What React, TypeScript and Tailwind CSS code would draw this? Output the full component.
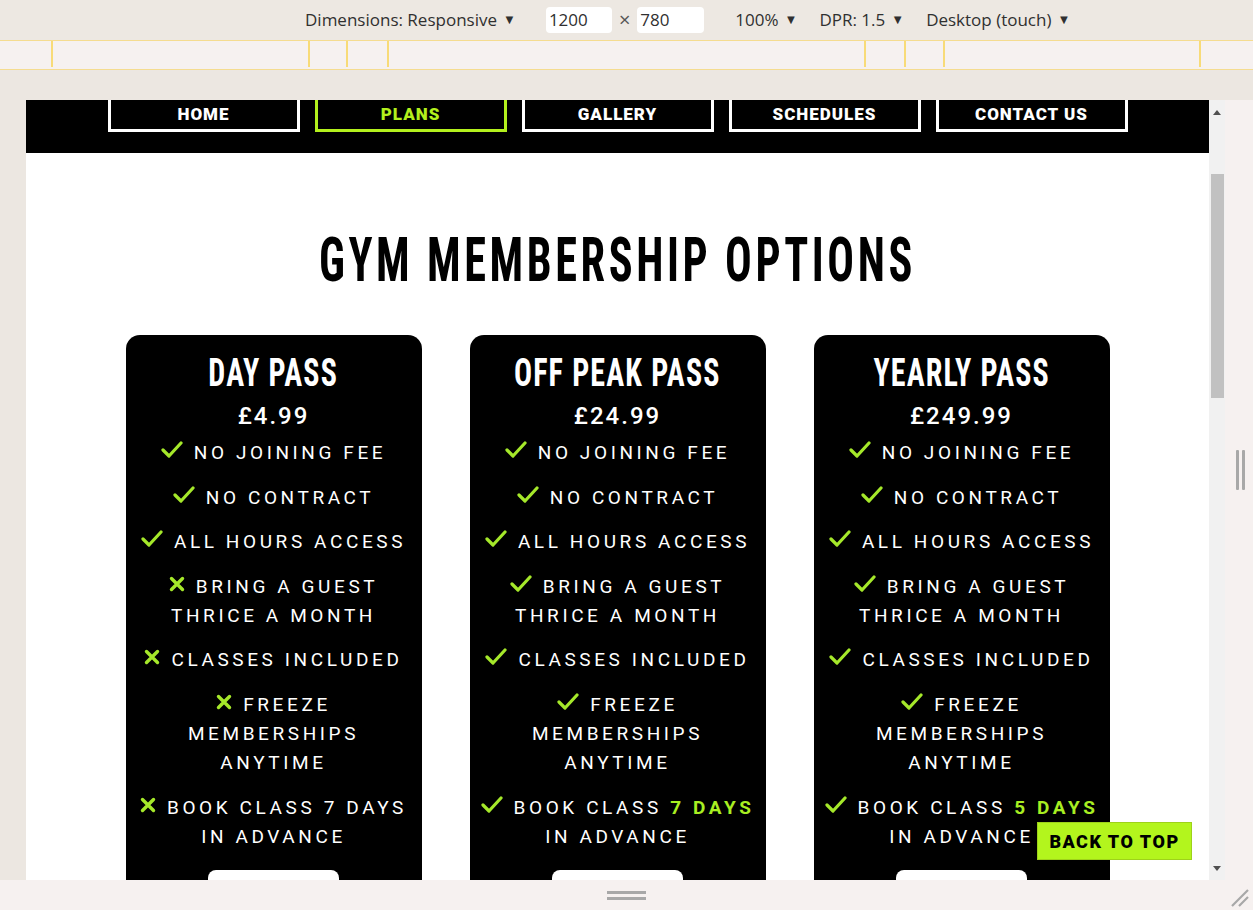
import React from 'react';

const GREEN = '#a5e82a';
const CONDENSED = "font-['Roboto_Condensed','Liberation_Sans',sans-serif]";

type Feature = { ok: boolean; lines: React.ReactNode[] };
type Plan = { name: string; price: string; features: Feature[] };

const lastLine = (days: string | null, strong: boolean) =>
  days ? (
    <>
      BOOK CLASS{' '}
      {strong ? <span className="font-bold text-[#a8ee22]">{days}</span> : days}
    </>
  ) : null;

const PLANS: Plan[] = [
  {
    name: 'DAY PASS',
    price: '£4.99',
    features: [
      { ok: true, lines: ['NO JOINING FEE'] },
      { ok: true, lines: ['NO CONTRACT'] },
      { ok: true, lines: ['ALL HOURS ACCESS'] },
      { ok: false, lines: ['BRING A GUEST', 'THRICE A MONTH'] },
      { ok: false, lines: ['CLASSES INCLUDED'] },
      { ok: false, lines: ['FREEZE', 'MEMBERSHIPS', 'ANYTIME'] },
      { ok: false, lines: [lastLine('7 DAYS', false), 'IN ADVANCE'] },
    ],
  },
  {
    name: 'OFF PEAK PASS',
    price: '£24.99',
    features: [
      { ok: true, lines: ['NO JOINING FEE'] },
      { ok: true, lines: ['NO CONTRACT'] },
      { ok: true, lines: ['ALL HOURS ACCESS'] },
      { ok: true, lines: ['BRING A GUEST', 'THRICE A MONTH'] },
      { ok: true, lines: ['CLASSES INCLUDED'] },
      { ok: true, lines: ['FREEZE', 'MEMBERSHIPS', 'ANYTIME'] },
      { ok: true, lines: [lastLine('7 DAYS', true), 'IN ADVANCE'] },
    ],
  },
  {
    name: 'YEARLY PASS',
    price: '£249.99',
    features: [
      { ok: true, lines: ['NO JOINING FEE'] },
      { ok: true, lines: ['NO CONTRACT'] },
      { ok: true, lines: ['ALL HOURS ACCESS'] },
      { ok: true, lines: ['BRING A GUEST', 'THRICE A MONTH'] },
      { ok: true, lines: ['CLASSES INCLUDED'] },
      { ok: true, lines: ['FREEZE', 'MEMBERSHIPS', 'ANYTIME'] },
      { ok: true, lines: [lastLine('5 DAYS', true), 'IN ADVANCE'] },
    ],
  },
];

const NAV = ['HOME', 'PLANS', 'GALLERY', 'SCHEDULES', 'CONTACT US'];

function Check() {
  return (
    <svg width="22" height="17" viewBox="0 0 22 17" className="inline-block align-[1px] mr-[11px]">
      <path d="M2 9 L8 15 L20 2" fill="none" stroke={GREEN} strokeWidth="3.2" strokeLinecap="round" strokeLinejoin="round" />
    </svg>
  );
}

function Cross() {
  return (
    <svg width="16" height="16" viewBox="0 0 16 16" className="inline-block align-[1px] mr-[11px]">
      <path d="M2.5 2.5 L13.5 13.5 M13.5 2.5 L2.5 13.5" stroke={GREEN} strokeWidth="3.4" strokeLinecap="round" />
    </svg>
  );
}

function Card({ plan }: { plan: Plan }) {
  return (
    <div className="w-[296px] shrink-0 bg-black rounded-[14px] pt-[15px] px-[10px] text-white flex flex-col items-center">
      <h2 className={`${CONDENSED} font-bold text-[39px] leading-[46px] tracking-[1.5px] whitespace-nowrap scale-x-[0.77]`}>
        {plan.name}
      </h2>
      <div className="font-['Roboto',sans-serif] font-medium text-[24px] leading-[30px] tracking-[2px] mt-[5px]">{plan.price}</div>
      <div className="mt-[7px] font-['Roboto',sans-serif] text-[19px] leading-[29px] tracking-[3.6px] text-center flex flex-col gap-[15.6px]">
        {plan.features.map((f, i) => (
          <p key={i} className="whitespace-nowrap">
            {f.ok ? <Check /> : <Cross />}
            {f.lines.map((l, j) => (
              <React.Fragment key={j}>
                {j > 0 && <br />}
                {l}
              </React.Fragment>
            ))}
          </p>
        ))}
      </div>
      <div className="mt-[19px] w-[131px] h-[40px] bg-white rounded-[8px]" />
    </div>
  );
}

function Tri({ down }: { down?: boolean }) {
  return (
    <svg width="8" height="5" viewBox="0 0 8 5">
      <path d={down ? 'M0 0 L8 0 L4 5 Z' : 'M0 5 L8 5 L4 0 Z'} fill="#505050" />
    </svg>
  );
}

export default function App() {
  const marks = [51, 255, 36, 39, 475, 38, 37, 254];
  return (
    <div className="w-[1253px] h-[910px] overflow-hidden bg-[#ece7e1] flex flex-col font-['Open_Sans',sans-serif]">
      {/* devtools toolbar */}
      <div className="h-[40px] shrink-0 bg-[#ede8e2] flex items-center pl-[305px] text-[17px] text-[#303030]">
        <span>Dimensions: Responsive</span>
        <span className="ml-[6px] text-[13px]">▼</span>
        <div className="ml-[30px] w-[66px] h-[26px] bg-white rounded-[4px] pl-[3px] leading-[26px]">1200</div>
        <span className="mx-[7px] text-[20px] leading-none text-[#555]">×</span>
        <div className="w-[67px] h-[26px] bg-white rounded-[4px] pl-[3px] leading-[26px]">780</div>
        <span className="ml-[31px]">100%</span>
        <span className="ml-[6px] text-[13px]">▼</span>
        <span className="ml-[22px]">DPR: 1.5</span>
        <span className="ml-[6px] text-[13px]">▼</span>
        <span className="ml-[22px]">Desktop (touch)</span>
        <span className="ml-[6px] text-[13px]">▼</span>
      </div>

      {/* media query ruler */}
      <div className="h-[30px] shrink-0 bg-[#f6f1f0] border-y border-[#f5dc90] flex">
        {marks.map((w, i) => (
          <React.Fragment key={i}>
            <div style={{ width: w }} className="shrink-0" />
            <div className="w-[2px] shrink-0 bg-[#f8db78] mb-[2px]" />
          </React.Fragment>
        ))}
      </div>

      <div className="h-[30px] shrink-0" />

      <div className="h-[780px] shrink-0 flex">
        <div className="w-[26px] shrink-0" />

        {/* page viewport */}
        <div className="w-[1183px] shrink-0 bg-white relative overflow-hidden">
          <nav className="h-[53px] bg-black flex justify-center gap-[15px]">
            {NAV.map((n) => (
              <div
                key={n}
                className={`w-[192px] h-[32px] border-x-[3px] border-b-[3px] flex items-center justify-center font-['Roboto',sans-serif] font-black text-[17px] tracking-[1px] ${
                  n === 'PLANS' ? 'border-[#b3f01d] text-[#b3f01d]' : 'border-white text-white'
                }`}
              >
                {n}
              </div>
            ))}
          </nav>

          <div className="mt-[72px] flex justify-center">
            <h1 className={`${CONDENSED} font-bold text-[62px] leading-[70px] tracking-[5px] text-black whitespace-nowrap scale-x-[0.715]`}>
              GYM MEMBERSHIP OPTIONS
            </h1>
          </div>

          <div className="mt-[40px] flex justify-center gap-[48px]">
            {PLANS.map((p) => (
              <Card key={p.name} plan={p} />
            ))}
          </div>

          <div className="absolute right-[17px] bottom-[20px] w-[155px] h-[38px] bg-[#b3f51d] border border-[#9ed21a] flex items-center justify-center font-['Roboto',sans-serif] font-black text-[18px] tracking-[1.5px] text-black">
            BACK TO TOP
          </div>
        </div>

        {/* scrollbar */}
        <div className="w-[16px] shrink-0 bg-[#f1f1f1] flex flex-col items-center">
          <div className="h-[15px] flex items-end pt-[6px]">
            <Tri />
          </div>
          <div className="mt-[59px] w-[13px] h-[224px] bg-[#c1c1c1]" />
          <div className="flex-1" />
          <div className="h-[16px] flex items-start pt-[2px]">
            <Tri down />
          </div>
        </div>

        <div className="w-[28px] shrink-0 bg-[#f6f1f0] flex items-center pl-[11px] pb-[40px]">
          <div className="flex gap-[3px]">
            <div className="w-[3px] h-[40px] bg-[#a8a8a8] rounded-[1px]" />
            <div className="w-[3px] h-[40px] bg-[#a8a8a8] rounded-[1px]" />
          </div>
        </div>
      </div>

      {/* bottom resize bar */}
      <div className="h-[30px] shrink-0 bg-[#f6f1f0] flex items-center pl-[607px]">
        <div className="flex flex-col gap-[3px]">
          <div className="w-[39px] h-[3px] bg-[#a8a8a8]" />
          <div className="w-[39px] h-[3px] bg-[#a8a8a8]" />
        </div>
        <svg className="ml-auto mr-[3px] mt-[6px]" width="20" height="20" viewBox="0 0 20 20">
          <path d="M2 18 L18 2 M9 18 L18 9" stroke="#a8a8a8" strokeWidth="2.2" />
        </svg>
      </div>
    </div>
  );
}
